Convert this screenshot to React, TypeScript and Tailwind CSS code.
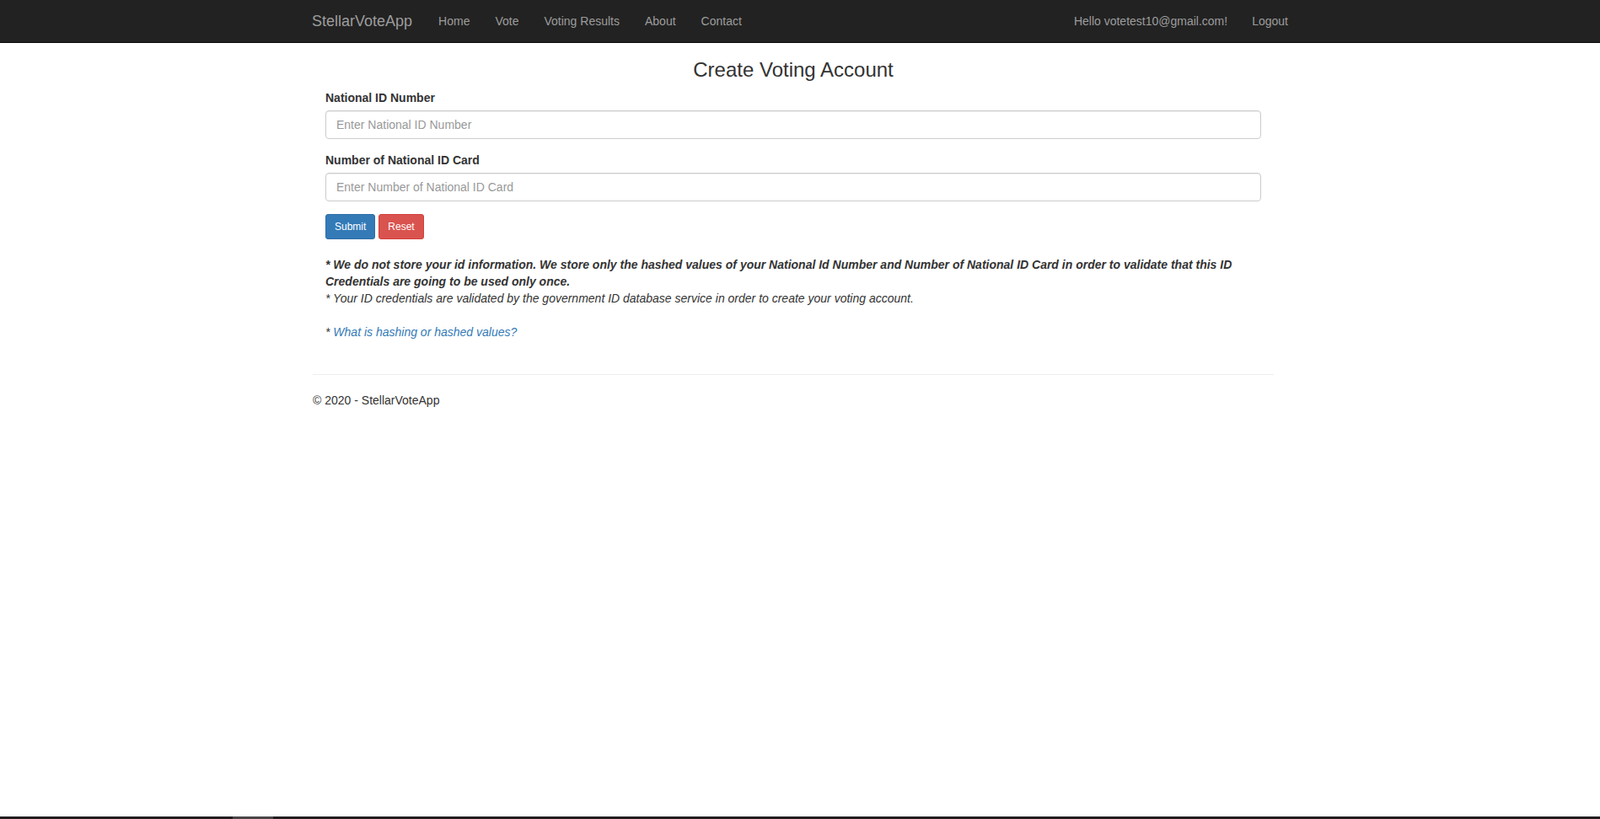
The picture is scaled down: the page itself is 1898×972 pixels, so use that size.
export default function App() {
  const navLinks = ["Home", "Vote", "Voting Results", "About", "Contact"];

  return (
    <div className="flex h-[972px] flex-col overflow-hidden bg-white font-['Liberation_Sans',Arial,sans-serif] text-[14px] leading-5 text-[#333]">
      {/* Navbar */}
      <nav className="h-[51px] shrink-0 border-b border-[#080808] bg-[#222]">
        <div className="mx-auto flex h-[50px] w-[1188px] items-stretch justify-between">
          <div className="flex">
            <a href="#" className="pl-[15px] pr-[16px] py-[15px] text-[18px] leading-5 text-[#9d9d9d]">
              StellarVoteApp
            </a>
            <ul className="flex">
              {navLinks.map((link) => (
                <li key={link}>
                  <a href="#" className="block px-[15px] py-[15px] leading-5 text-[#9d9d9d]">
                    {link}
                  </a>
                </li>
              ))}
            </ul>
          </div>
          <ul className="flex">
            <li>
              <a href="#" className="block pl-[16px] pr-[14px] py-[15px] leading-5 text-[#9d9d9d]">
                Hello votetest10@gmail.com!
              </a>
            </li>
            <li>
              <a href="#" className="block px-[15px] py-[15px] leading-5 text-[#9d9d9d]">
                Logout
              </a>
            </li>
          </ul>
        </div>
      </nav>

      {/* Body */}
      <div className="flex-1">
        <div className="ml-[356px] w-[1170px] px-[15px]">
          <div className="px-[15px]">
            <h3 className="mb-[10px] mt-[19px] text-center text-[24px] leading-[26.4px] font-normal">
              Create Voting Account
            </h3>

            <form onSubmit={(e) => e.preventDefault()}>
              <div className="mb-[15px]">
                <label className="mb-[5px] block font-bold">National ID Number</label>
                <input
                  type="text"
                  placeholder="Enter National ID Number"
                  className="block h-[34px] w-full rounded-[4px] border border-[#ccc] px-3 py-[6px] text-[14px] text-[#555] shadow-[inset_0_1px_1px_rgba(0,0,0,0.075)] outline-none placeholder:text-[#999]"
                />
              </div>
              <div className="mb-[15px]">
                <label className="mb-[5px] block font-bold">Number of National ID Card</label>
                <input
                  type="text"
                  placeholder="Enter Number of National ID Card"
                  className="block h-[34px] w-full rounded-[4px] border border-[#ccc] px-3 py-[6px] text-[14px] text-[#555] shadow-[inset_0_1px_1px_rgba(0,0,0,0.075)] outline-none placeholder:text-[#999]"
                />
              </div>
              <div className="flex gap-1">
                <button
                  type="submit"
                  className="rounded-[3px] border border-[#2e6da4] bg-[#337ab7] px-[10px] py-[5px] text-[12px] leading-[18px] text-white"
                >
                  Submit
                </button>
                <button
                  type="reset"
                  className="rounded-[3px] border border-[#d43f3a] bg-[#d9534f] px-[10px] py-[5px] text-[12px] leading-[18px] text-white"
                >
                  Reset
                </button>
              </div>
            </form>

            <div className="mt-5 italic">
              <b>
                * We do not store your id information. We store only the hashed values of your National Id
                Number and Number of National ID Card in order to validate that this ID Credentials are going
                to be used only once.
              </b>
              <br />
              * Your ID credentials are validated by the government ID database service in order to create
              your voting account.
              <br />
              <br />
              * <a href="#" className="text-[#337ab7]">What is hashing or hashed values?</a>
            </div>
          </div>

          <hr className="mb-5 mt-[40px] border-t border-[#eee]" />
          <footer>
            <p className="mb-[10px]">© 2020 - StellarVoteApp</p>
          </footer>
        </div>
      </div>

      {/* bottom strip */}
      <div className="flex h-[3px] shrink-0 bg-[#221e1f]">
        <div className="ml-[276px] w-[48px] bg-[#4a4547]" />
      </div>
    </div>
  );
}
